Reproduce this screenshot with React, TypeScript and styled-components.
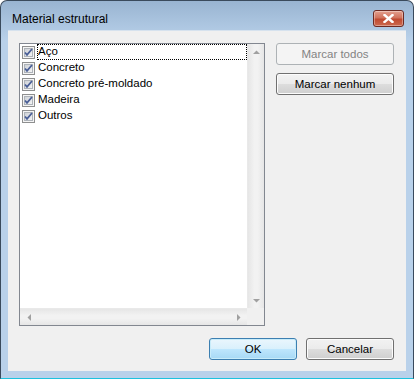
import React from 'react'
import styled, { createGlobalStyle } from 'styled-components'

const GlobalStyle = createGlobalStyle`
  html, body {
    margin: 0;
    padding: 0;
    background: #ffffff;
  }
  body {
    font-family: 'Segoe UI', 'Liberation Sans', Arial, sans-serif;
    font-size: 11px;
  }
`

const uiFont = `font-family: 'Liberation Sans', Arial, sans-serif;`

const Window = styled.div`
  width: 414px;
  height: 379px;
  box-sizing: border-box;
  border: 1px solid #3a4a5c;
  border-bottom-color: #1ec2de;
  border-radius: 7px 7px 0 0;
  background: linear-gradient(to bottom, #99b4d1 0px, #a9c3de 20px, #b9d1ea 40px, #b9d1ea 100%);
  display: flex;
  flex-direction: column;
  overflow: hidden;
`

const TitleBar = styled.div`
  height: 29px;
  display: flex;
  align-items: flex-start;
  justify-content: space-between;
  padding: 9px 9px 0 11px;
  box-sizing: border-box;
`

const Title = styled.div`
  ${uiFont}
  font-size: 12px;
  line-height: 16px;
  color: #000000;
  padding-top: 1px;
`

const CloseButton = styled.div`
  width: 31px;
  height: 17px;
  box-sizing: border-box;
  border: 1px solid #6d2a22;
  border-radius: 3px;
  background: linear-gradient(to bottom, #e4a08f 0%, #d1735d 45%, #c04a31 55%, #cc6a4f 100%);
  display: flex;
  align-items: center;
  justify-content: center;
  box-shadow: inset 0 0 0 1px rgba(255, 255, 255, 0.35);
`

const Frame = styled.div`
  flex: 1;
  padding: 0 7px 7px 7px;
  display: flex;
`

const Client = styled.div`
  flex: 1;
  background: #f0f0f0;
  display: flex;
  flex-direction: column;
  padding: 12px 12px 11px 11px;
  box-sizing: border-box;
  border-top: 1px solid #d6e2ee;
`

const TopRow = styled.div`
  display: flex;
  gap: 11px;
`

const ListBox = styled.div`
  width: 246px;
  height: 283px;
  box-sizing: border-box;
  border: 1px solid #828790;
  background: #ffffff;
  display: grid;
  grid-template-columns: 1fr 17px;
  grid-template-rows: 1fr 17px;
`

const Items = styled.div`
  padding: 0 0 0 2px;
  display: flex;
  flex-direction: column;
`

const Item = styled.div`
  height: 16px;
  display: flex;
  align-items: center;
  gap: 2px;
  ${uiFont}
  font-size: 11.5px;
  color: #000000;
`

const Label = styled.span<{ $focused?: boolean }>`
  flex: 1;
  height: 16px;
  box-sizing: border-box;
  border: 1px dotted ${(p) => (p.$focused ? '#000000' : 'transparent')};
  line-height: 13px;
  white-space: nowrap;
`

const VScroll = styled.div`
  background: linear-gradient(to right, #e6e6e6, #f2f2f2 40%, #f2f2f2 60%, #e6e6e6);
  border-left: 1px solid #e9e9e9;
  display: flex;
  flex-direction: column;
  justify-content: space-between;
  align-items: center;
  padding: 6px 0 5px;
`

const HScroll = styled.div`
  background: linear-gradient(to bottom, #e6e6e6, #f2f2f2 40%, #f2f2f2 60%, #e6e6e6);
  border-top: 1px solid #e9e9e9;
  display: flex;
  justify-content: space-between;
  align-items: center;
  padding: 0 6px 0 7px;
`

const Corner = styled.div`
  background: #f0f0f0;
`

const SideButtons = styled.div`
  display: flex;
  flex-direction: column;
  gap: 8px;
`

const Button = styled.div<{ $width: number; $default?: boolean; $disabled?: boolean }>`
  width: ${(p) => p.$width}px;
  height: 22px;
  box-sizing: border-box;
  border: 1px solid ${(p) => (p.$disabled ? '#adb2b5' : p.$default ? '#3c7fb1' : '#707070')};
  border-radius: 3px;
  background: ${(p) =>
    p.$disabled
      ? '#f4f4f4'
      : p.$default
      ? 'linear-gradient(to bottom, #eaf6fd 0%, #d9f0fc 50%, #bee6fd 51%, #a7d9f5 100%)'
      : 'linear-gradient(to bottom, #f2f2f2 0%, #ebebeb 50%, #dddddd 51%, #cfcfcf 100%)'};
  box-shadow: inset 0 0 0 1px ${(p) => (p.$disabled ? 'transparent' : p.$default ? '#c8ecfa' : '#fcfcfc')};
  color: ${(p) => (p.$disabled ? '#838383' : '#000000')};
  ${uiFont}
  font-size: 11.5px;
  display: flex;
  align-items: center;
  justify-content: center;
  padding-bottom: 1px;
`

const BottomRow = styled.div`
  margin-top: auto;
  display: flex;
  justify-content: flex-end;
  gap: 9px;
`

const Check = () => (
  <svg width="13" height="13" viewBox="0 0 13 13">
    <defs>
      <linearGradient id="cbg" x1="0" y1="0" x2="1" y2="1">
        <stop offset="0" stopColor="#cbcfd5" />
        <stop offset="1" stopColor="#f6f6f6" />
      </linearGradient>
    </defs>
    <rect x="0.5" y="0.5" width="12" height="12" fill="#f4f4f4" stroke="#8e8f8f" />
    <rect x="2.5" y="2.5" width="8" height="8" fill="url(#cbg)" stroke="#aeb3b9" />
    <path d="M3 6.5 L5 8.8 L10 3" fill="none" stroke="#4a5f97" strokeWidth="1.8" />
  </svg>
)

const Arrow = ({ dir }: { dir: 'up' | 'down' | 'left' | 'right' }) => {
  const pts = {
    up: '0,4 3.5,0.5 7,4',
    down: '0,0 7,0 3.5,3.5',
    left: '4,0 4,7 0.5,3.5',
    right: '0,0 0,7 3.5,3.5',
  }[dir]
  const vertical = dir === 'up' || dir === 'down'
  return (
    <svg width={vertical ? 7 : 4} height={vertical ? 4 : 7} viewBox={vertical ? '0 0 7 4' : '0 0 4 7'}>
      <polygon points={pts} fill="#a0a0a0" />
    </svg>
  )
}

const items = ['Aço', 'Concreto', 'Concreto pré-moldado', 'Madeira', 'Outros']

export default function App() {
  return (
    <>
      <GlobalStyle />
      <Window>
        <TitleBar>
          <Title>Material estrutural</Title>
          <CloseButton>
            <svg width="11" height="9" viewBox="0 0 11 9">
              <path d="M1.5 1 L9.5 8 M9.5 1 L1.5 8" stroke="#ffffff" strokeWidth="2.4" strokeLinecap="square" />
            </svg>
          </CloseButton>
        </TitleBar>
        <Frame>
          <Client>
            <TopRow>
              <ListBox>
                <Items>
                  {items.map((name, i) => (
                    <Item key={name}>
                      <Check />
                      <Label $focused={i === 0}>{name}</Label>
                    </Item>
                  ))}
                </Items>
                <VScroll>
                  <Arrow dir="up" />
                  <Arrow dir="down" />
                </VScroll>
                <HScroll>
                  <Arrow dir="left" />
                  <Arrow dir="right" />
                </HScroll>
                <Corner />
              </ListBox>
              <SideButtons>
                <Button $width={118} $disabled>
                  Marcar todos
                </Button>
                <Button $width={118}>Marcar nenhum</Button>
              </SideButtons>
            </TopRow>
            <BottomRow>
              <Button $width={88} $default>
                OK
              </Button>
              <Button $width={88}>Cancelar</Button>
            </BottomRow>
          </Client>
        </Frame>
      </Window>
    </>
  )
}
